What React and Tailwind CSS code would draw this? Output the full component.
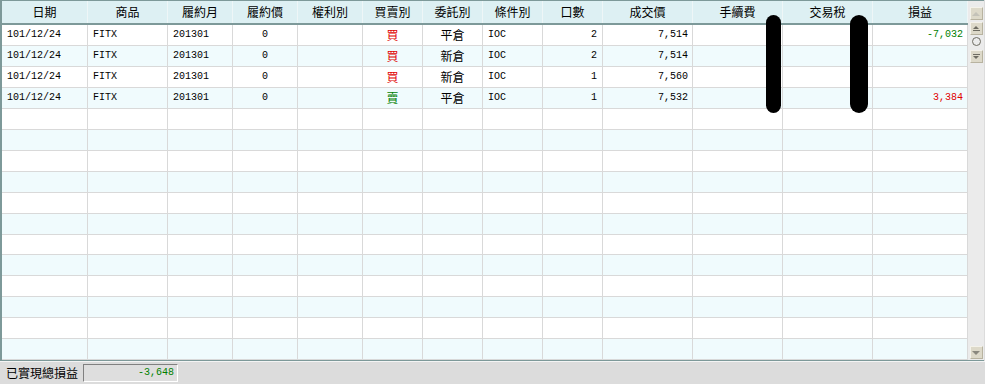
import React from 'react'

const cjk = '[font-family:"Noto_Sans_CJK_TC","Noto_Sans_CJK_SC",sans-serif]'

const columns = [
    { name: '日期', w: 'w-[86px]', align: 'text-left pl-[5px]' },
    { name: '商品', w: 'w-[80px]', align: 'text-left pl-[5px]' },
    { name: '履約月', w: 'w-[65px]', align: 'text-left pl-[5px]' },
    { name: '履約價', w: 'w-[65px]', align: 'text-center' },
    { name: '權利別', w: 'w-[65px]', align: 'text-center' },
    { name: '買賣別', w: 'w-[60px]', align: 'text-center' },
    { name: '委託別', w: 'w-[60px]', align: 'text-center' },
    { name: '條件別', w: 'w-[60px]', align: 'text-left pl-[5px]' },
    { name: '口數', w: 'w-[60px]', align: 'text-right pr-[5px]' },
    { name: '成交價', w: 'w-[90px]', align: 'text-right pr-[4px]' },
    { name: '手續費', w: 'w-[90px]', align: 'text-right pr-[4px]' },
    { name: '交易稅', w: 'w-[90px]', align: 'text-right pr-[4px]' },
    { name: '損益', w: 'w-[95px]', align: 'text-right pr-[4px]' },
]

const trades = [
    ['101/12/24', 'FITX', '201301', '0', '', '買', '平倉', 'IOC', '2', '7,514', '', '', '-7,032'],
    ['101/12/24', 'FITX', '201301', '0', '', '買', '新倉', 'IOC', '2', '7,514', '', '', ''],
    ['101/12/24', 'FITX', '201301', '0', '', '買', '新倉', 'IOC', '1', '7,560', '', '', ''],
    ['101/12/24', 'FITX', '201301', '0', '', '賣', '平倉', 'IOC', '1', '7,532', '', '', '3,384'],
]

// empty rows fill the rest of the grid
const rows = [...trades]
while (rows.length < 16) rows.push(Array(13).fill(''))

function cellColor(ci, val) {
    if (ci === 5) return val === '買' ? 'text-[#e00000]' : 'text-[#008000]'
    if (ci === 12) return val.startsWith('-') ? 'text-[#008000]' : 'text-[#e00000]'
    return 'text-black'
}

function ScrollButton({ children }) {
    return (
        <div className="w-[13px] h-[13px] mx-auto flex items-center justify-center bg-[#ddd9c9] border border-t-[#f4f2ea] border-l-[#f4f2ea] border-b-[#b8b3a0] border-r-[#b8b3a0]">
            {children}
        </div>
    )
}

function Scrollbar() {
    return (
        <div className="w-[16px] bg-[#ebebeb] flex flex-col pt-[6px] pb-[1px]">
            <ScrollButton>
                <div className="w-0 h-0 border-l-[4px] border-r-[4px] border-b-[4px] border-l-transparent border-r-transparent border-b-[#c4c2b8]" />
            </ScrollButton>
            <div className="h-[2px]" />
            <ScrollButton>
                <div className="flex flex-col items-center">
                    <div className="w-0 h-0 border-l-[3px] border-r-[3px] border-b-[3px] border-l-transparent border-r-transparent border-b-[#6e6c62]" />
                    <div className="w-[7px] h-px bg-[#6e6c62] mt-px" />
                </div>
            </ScrollButton>
            <div className="h-[12px] mx-auto flex items-center">
                <div className="w-[9px] h-[9px] rounded-full border border-[#6e6c62]" />
            </div>
            <div className="h-[3px]" />
            <ScrollButton>
                <div className="flex flex-col items-center">
                    <div className="w-[7px] h-px bg-[#6e6c62] mb-px" />
                    <div className="w-0 h-0 border-l-[3px] border-r-[3px] border-t-[3px] border-l-transparent border-r-transparent border-t-[#6e6c62]" />
                </div>
            </ScrollButton>
            <div className="flex-1" />
            <ScrollButton>
                <div className="w-0 h-0 border-l-[4px] border-r-[4px] border-t-[4px] border-l-transparent border-r-transparent border-t-[#8a887e]" />
            </ScrollButton>
        </div>
    )
}

export default function App() {
    return (
        <div className="relative w-[985px] h-[384px] bg-[#dcdcdc] overflow-hidden">
            <div className="flex w-[984px] h-[361px] border-t border-l-2 border-b border-[#7d9999] bg-[#f6f4e4]">
                <div className="flex flex-col w-[966px] bg-white">
                    {/* header */}
                    <div className={`flex h-[24px] bg-[#ddf0f3] border-b-2 border-[#7d9999] ${cjk} text-[12px] leading-[22px]`}>
                        {columns.map((c) => (
                            <div key={c.name} className={`${c.w} shrink-0 text-center border-r border-[#eef6f7]`}>
                                {c.name}
                            </div>
                        ))}
                    </div>
                    {/* body */}
                    {rows.map((r, ri) => (
                        <div key={ri} className={`flex h-[21px] border-b border-[#d9d9d9] ${ri % 2 ? 'bg-[#f0fbfd]' : 'bg-white'}`}>
                            {r.map((val, ci) => {
                                const isCjk = ci === 5 || ci === 6
                                return (
                                    <div
                                        key={ci}
                                        className={`${columns[ci].w} ${columns[ci].align} ${cellColor(ci, val)} shrink-0 border-r border-[#d9d9d9] leading-[20px] ${isCjk ? `${cjk} text-[12px]` : '[font-family:"Liberation_Mono",monospace] text-[10px]'}`}
                                    >
                                        {val}
                                    </div>
                                )
                            })}
                        </div>
                    ))}
                </div>
                <Scrollbar />
            </div>
            <div className="w-[985px] h-px bg-[#f4f4f4]" />
            {/* total bar */}
            <div className="flex items-center h-[22px] pl-[6px] gap-[5px]">
                <span className={`${cjk} text-[12px] text-black leading-[18px]`}>已實現總損益</span>
                <div className="w-[95px] h-[18px] border border-t-[#808080] border-l-[#808080] border-b-white border-r-white bg-[#dedede] text-right pr-[3px] text-[#008000] text-[10px] leading-[16px] [font-family:'Liberation_Mono',monospace]">
                    -3,648
                </div>
            </div>
            {/* redaction marks */}
            <div className="absolute left-[766px] top-[15px] w-[15px] h-[98px] rounded-full bg-black" />
            <div className="absolute left-[850px] top-[15px] w-[18px] h-[98px] rounded-full bg-black" />
        </div>
    )
}
